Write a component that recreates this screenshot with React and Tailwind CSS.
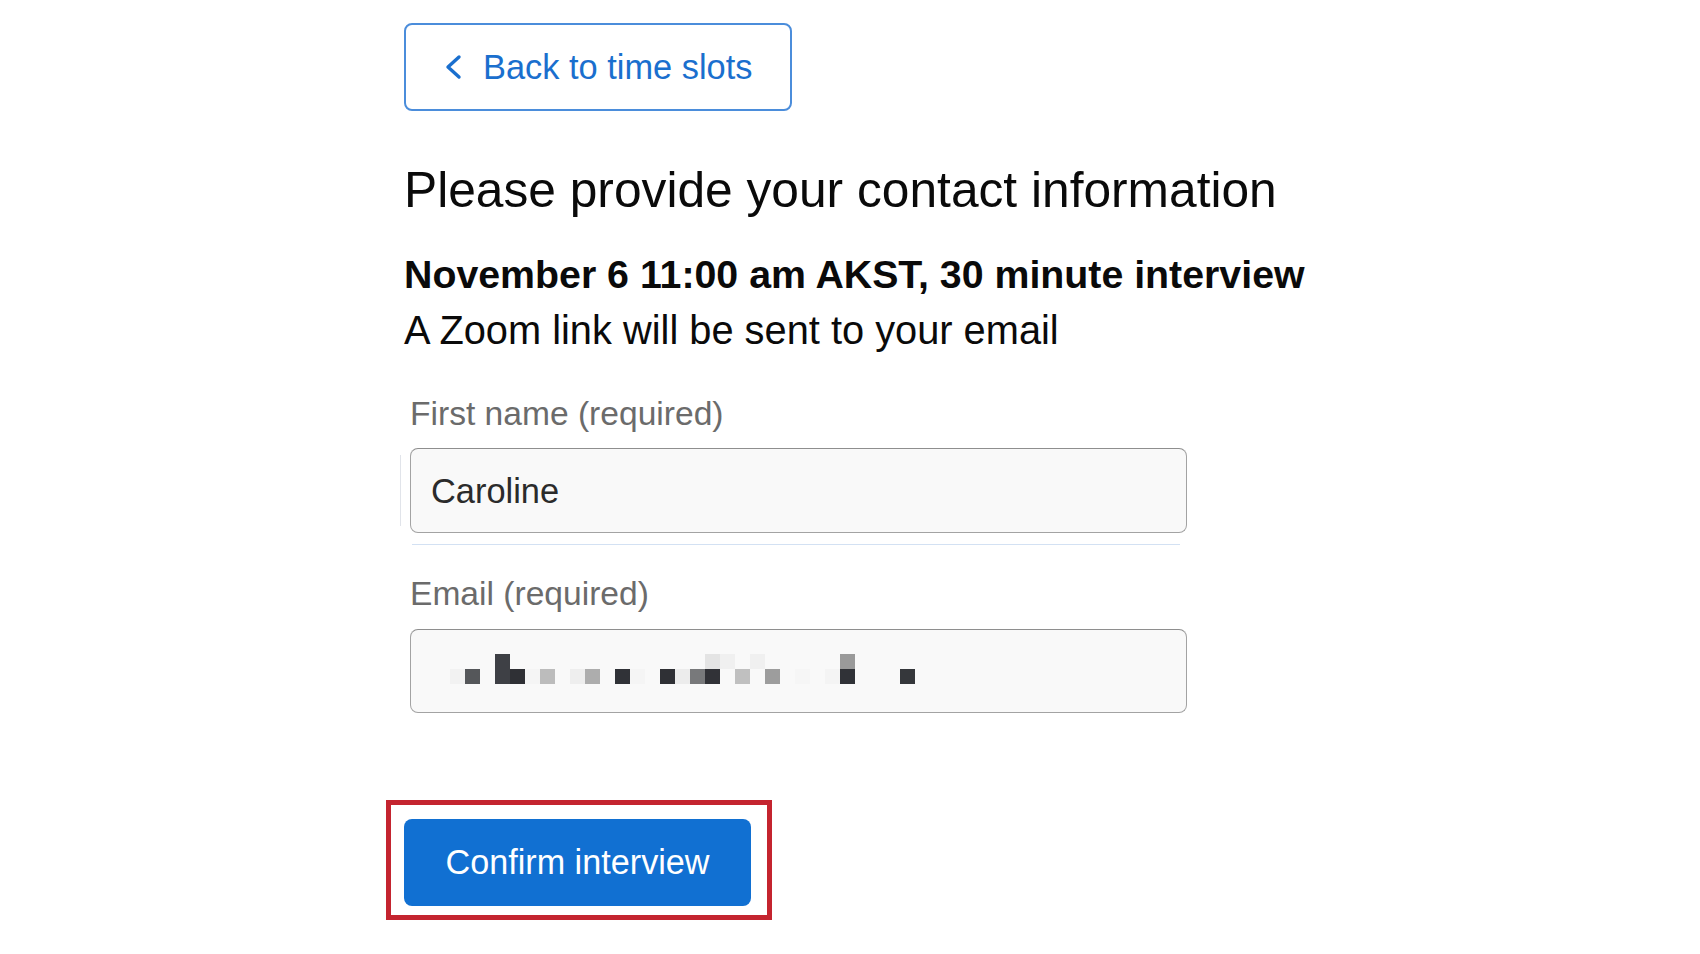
import React from 'react';

// pixelated (redacted) email value: [column, row, colour], 15px cells
const EMAIL_PIXELS = [
  [0, 1, '#f2f2f2'],
  [1, 1, '#55575a'],
  [3, 0, '#3e4045'],
  [3, 1, '#3e4045'],
  [4, 1, '#2f3035'],
  [5, 1, '#f5f5f5'],
  [6, 1, '#bcbcbc'],
  [8, 1, '#eeeeee'],
  [9, 1, '#adadad'],
  [11, 1, '#303237'],
  [12, 1, '#f5f5f5'],
  [14, 1, '#2f3035'],
  [15, 1, '#ececec'],
  [16, 1, '#78797b'],
  [17, 0, '#e4e4e4'],
  [17, 1, '#313237'],
  [18, 0, '#f0f0f0'],
  [19, 1, '#c0c0c0'],
  [20, 0, '#f0f0f0'],
  [21, 1, '#9d9d9d'],
  [23, 1, '#f6f6f6'],
  [25, 1, '#f4f4f4'],
  [26, 0, '#9a9a9a'],
  [26, 1, '#303237'],
  [30, 1, '#35373b'],
];

const Field = ({ label, children, className = '' }) => (
  <div className={className}>
    <div className="pl-[10px] text-[33.6px] leading-[40px] text-[#6b6b6b]">{label}</div>
    {children}
  </div>
);

const InputBox = ({ children }) => (
  <div className="w-[777px] h-[85px] flex items-center rounded-[8px] border border-[#a3a3a3] border-t-[#8e8e8e] bg-[#f9f9f9]">
    {children}
  </div>
);

export default function App() {
  return (
    <div
      className="min-h-screen bg-white text-black"
      style={{ fontFamily: '"Liberation Sans", Arial, sans-serif' }}
    >
      <div className="pl-[404px] pt-[23px] pb-10">
        {/* back */}
        <button className="w-[388px] h-[88px] flex items-center gap-[20px] pl-[39px] rounded-[8px] border-2 border-[#4b8ddb] bg-white text-[#1a6fce]">
          <svg width="18" height="26" viewBox="0 0 18 26" fill="none">
            <polyline
              points="14,3 3,13 14,23"
              stroke="#1a6fce"
              strokeWidth="3.4"
              strokeLinecap="round"
              strokeLinejoin="round"
            />
          </svg>
          <span className="text-[34.4px] leading-none">Back to time slots</span>
        </button>

        <h1 className="mt-[51px] text-[49.7px] leading-[56px] font-normal text-[#0a0a0a]">
          Please provide your contact information
        </h1>
        <p className="mt-[28px] text-[39.3px] leading-[56px] font-bold text-[#0a0a0a]">
          November 6 11:00 am AKST, 30 minute interview
        </p>
        <p className="text-[39.8px] leading-[56px] text-[#0a0a0a]">A Zoom link will be sent to your email</p>

        <div className="-ml-[4px] mt-[36px]">
          <Field label="First name (required)">
            <div className="mt-[14px] flex items-center">
              <div className="w-px h-[71px] bg-[#e1e4ea]" />
              <div className="ml-[9px]">
                <InputBox>
                  <span className="pl-[20px] pt-[2px] text-[34.4px] text-[#2b2b2b]">Caroline</span>
                </InputBox>
              </div>
            </div>
          </Field>
          <div className="mt-[11px] ml-[12px] w-[768px] h-px bg-[#d3e1f3]" />

          <Field label="Email (required)" className="mt-[29px]">
            <div className="mt-[15px] ml-[10px]">
              <div className="w-[777px] h-[84px] flex items-center pl-[39px] pb-1 rounded-[8px] border border-[#a3a3a3] border-t-[#8e8e8e] bg-[#f9f9f9]">
                <svg width="480" height="30" viewBox="0 0 480 30">
                  {EMAIL_PIXELS.map(([c, r, fill], i) => (
                    <rect key={i} x={c * 15} y={r * 15} width="15" height="15" fill={fill} />
                  ))}
                </svg>
              </div>
            </div>
          </Field>
        </div>

        {/* highlighted confirm */}
        <div className="mt-[87px] -ml-[18px] w-fit border-[5px] border-[#c4242f] pl-[13px] pt-[14px] pr-[16px] pb-[9px]">
          <button className="w-[347px] h-[87px] flex items-center justify-center rounded-[8px] bg-[#1170d2] text-white text-[34.2px]">
            Confirm interview
          </button>
        </div>
      </div>
    </div>
  );
}
